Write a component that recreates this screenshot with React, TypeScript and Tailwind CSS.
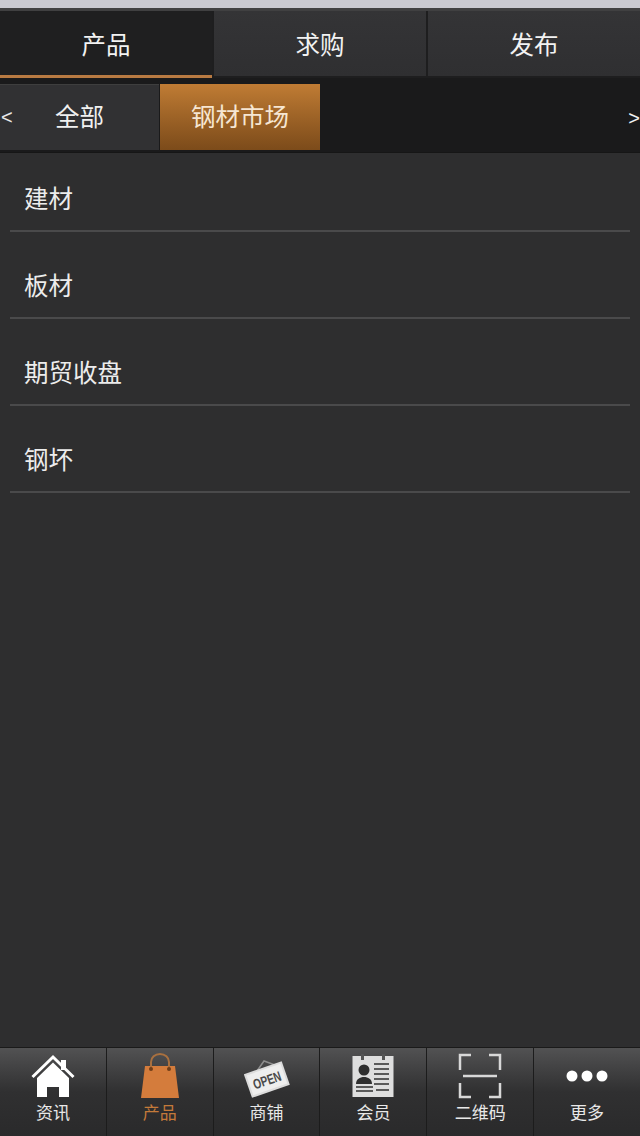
import React from "react";

const cjk = "font-['Noto_Sans_CJK_SC','Liberation_Sans',sans-serif]";

const topTabs = [
  { label: "产品", active: true },
  { label: "求购", active: false },
  { label: "发布", active: false },
];

const listItems = ["建材", "板材", "期贸收盘", "钢坏"];

const HomeIcon = () => (
  <svg width="44" height="44" viewBox="0 0 44 44" className="block">
    <path d="M30 6h5v10h-5z" fill="#fff" />
    <path d="M1.5 23 22 3l20.5 20" fill="none" stroke="#fff" strokeWidth="3" />
    <path d="M22 8.5 6 24v19h10V33h12v10h10V24z" fill="#fff" />
  </svg>
);

const BagIcon = () => (
  <svg width="40" height="46" viewBox="0 0 40 46" className="block">
    <path d="M5 13h30l4 32H1z" fill="#d47c3c" />
    <path d="M11 16V9a9 8 0 0 1 18 0v7" fill="none" stroke="#a8703f" strokeWidth="2" />
    <circle cx="11" cy="16" r="2" fill="#6e3d18" />
    <circle cx="29" cy="16" r="2" fill="#6e3d18" />
  </svg>
);

const OpenIcon = () => (
  <svg width="46" height="40" viewBox="0 0 46 40" className="block mt-[6px]">
    <path d="M13 12 20 2l11 4" fill="none" stroke="#8d8d8d" strokeWidth="1.5" />
    <g transform="rotate(-19 23 21)">
      <rect x="3" y="8" width="40" height="25" fill="#dcdcdc" />
      <rect x="5" y="10" width="36" height="21" fill="#eeeeee" />
      <text x="23" y="26" textAnchor="middle" fontSize="14" fontWeight="700" fill="#4a4a4a" textLength="29" lengthAdjust="spacingAndGlyphs" fontFamily="'Liberation Sans',sans-serif">
        OPEN
      </text>
    </g>
  </svg>
);

const MemberIcon = () => (
  <svg width="42" height="44" viewBox="0 0 42 44" className="block">
    <rect x="0.5" y="2" width="41" height="41" fill="#dedede" />
    <rect x="9" y="0" width="3" height="6" fill="#555" />
    <rect x="30" y="0" width="3" height="6" fill="#555" />
    <circle cx="12" cy="16" r="5.5" fill="#2f2f2f" />
    <path d="M4 30c0-5 4-7 8-7s8 2 8 7z" fill="#2f2f2f" />
    <path d="M4 33h17M4 37h17M22 10h15M22 15h15M22 20h15M22 25h15M22 30h15M24 36h13" stroke="#5a5a5a" strokeWidth="2" />
  </svg>
);

const ScanIcon = () => (
  <svg width="44" height="46" viewBox="0 0 44 46" className="block">
    <path d="M13 2H2v15M31 2h11v15M2 30v14h11M42 30v14H31" fill="none" stroke="#d8d8d8" strokeWidth="2.5" />
    <path d="M5 23h34" stroke="#d8d8d8" strokeWidth="2.5" />
  </svg>
);

const DotsIcon = () => (
  <svg width="44" height="14" viewBox="0 0 44 14" className="block">
    <circle cx="7" cy="7" r="5.5" fill="#fff" />
    <circle cx="22" cy="7" r="5.5" fill="#fff" />
    <circle cx="37" cy="7" r="5.5" fill="#fff" />
  </svg>
);

const bottomTabs = [
  { label: "资讯", icon: <HomeIcon />, active: false },
  { label: "产品", icon: <BagIcon />, active: true },
  { label: "商铺", icon: <OpenIcon />, active: false },
  { label: "会员", icon: <MemberIcon />, active: false },
  { label: "二维码", icon: <ScanIcon />, active: false },
  { label: "更多", icon: <DotsIcon />, active: false },
];

export default function App() {
  return (
    <div className={`w-[640px] h-[1136px] flex flex-col overflow-hidden bg-[#2e2e2f] ${cjk}`}>
      <div className="h-[8px] shrink-0 bg-[#c9c9d0]" />

      {/* top tabs */}
      <div className="h-[70px] shrink-0 flex bg-[#1b1b1c] border-t-[3px] border-[#404041]">
        {topTabs.map((tab) => (
          <div
            key={tab.label}
            className={`flex-1 flex items-center justify-center pt-[2px] text-[24.5px] text-[#f2f2f2] ${
              tab.active
                ? "bg-[#1f1f20] border-b-[3px] border-[#b87a42]"
                : "bg-gradient-to-b from-[#343436] to-[#2f2f31] border-l-2 border-[#1e1e1f] border-b-2"
            }`}>
            {tab.label}
          </div>
        ))}
      </div>

      {/* sub nav */}
      <div className="h-[75px] shrink-0 relative flex items-stretch bg-[#1a1a1b] pt-[6px] pb-[2px] border-b border-[#161616]">
        <div className="w-[159px] flex items-center justify-center pb-[2px] text-[24.5px] text-[#f0f0f0] bg-[#313133] border-t border-[#3e3e3e]">
          全部
        </div>
        <div className="w-[160px] ml-[1px] flex items-center justify-center pb-[2px] text-[24.5px] text-[#f6e6d2] bg-gradient-to-b from-[#c07c34] to-[#7c4b1a]">
          钢材市场
        </div>
        <span className="absolute left-[1px] top-[26px] text-[20px] leading-[26px] text-[#e8e8e8] font-['Liberation_Sans']">&lt;</span>
        <span className="absolute right-0 top-[27px] text-[20px] leading-[26px] text-[#f0f0f0] font-['Liberation_Sans']">&gt;</span>
      </div>

      {/* list */}
      <div className="flex-1 px-[10px]">
        {listItems.map((item) => (
          <div
            key={item}
            className="h-[87px] first:h-[79px] flex items-end pl-[14px] pb-[16px] text-[24.5px] leading-[32px] text-[#ececec] border-b-2 border-[#4a4a4b]">
            {item}
          </div>
        ))}
      </div>

      {/* bottom nav */}
      <div className="h-[89px] shrink-0 flex bg-gradient-to-b from-[#525253] via-[#303031] to-[#2a2a2b] border-t border-[#1a1a1a]">
        {bottomTabs.map((tab) => (
          <div
            key={tab.label}
            className="flex-1 flex flex-col items-center border-r border-[#1c1c1c] last:border-r-0">
            <div className="h-[50px] mt-[3px] flex items-center justify-center">{tab.icon}</div>
            <span className={`text-[17px] leading-[20px] mt-[1px] ${tab.active ? "text-[#c47a3a]" : "text-[#e8e8e8]"}`}>
              {tab.label}
            </span>
          </div>
        ))}
      </div>
    </div>
  );
}
